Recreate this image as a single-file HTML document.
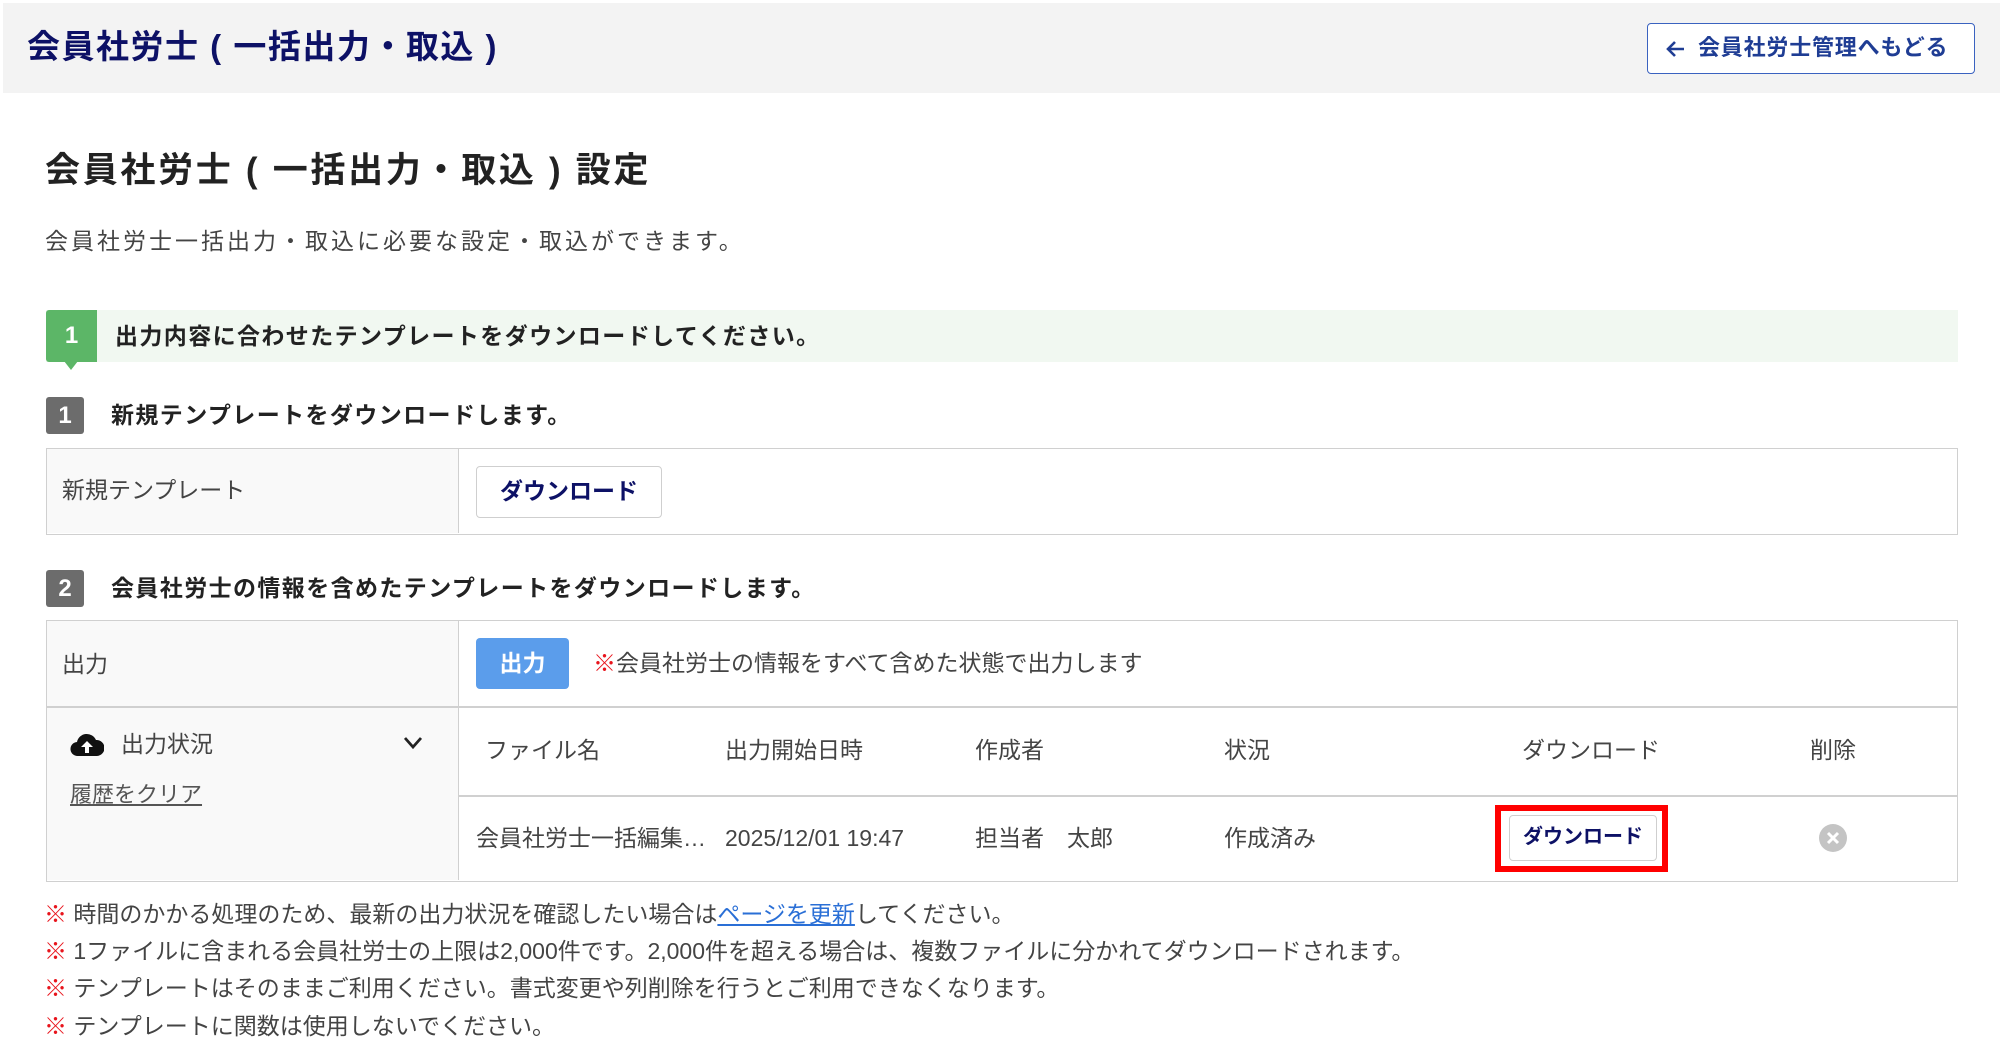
<!DOCTYPE html>
<html><head><meta charset="utf-8"><style>
*{margin:0;padding:0;box-sizing:border-box}
body{width:2000px;height:1053px;background:#fff;font-family:"Liberation Sans","Noto Sans CJK JP",sans-serif;color:#333;position:relative;overflow:hidden}
.a{position:absolute;white-space:nowrap}
.hdr{left:3px;top:3px;width:1997px;height:90px;background:#f3f3f3}
.t1{left:27px;top:24px;font-size:33px;font-weight:bold;color:#0d1166;line-height:46px;letter-spacing:1.5px}
.back{left:1647px;top:23px;width:328px;height:51px;border:1.5px solid #3a62c0;border-radius:4px;background:#fff;color:#1f3d94;font-weight:bold;font-size:22px;line-height:48px;padding-left:50px;letter-spacing:0.8px}
.h1{left:45px;top:148px;font-size:35px;font-weight:bold;color:#222;line-height:46px;letter-spacing:2.7px}
.desc{left:45px;top:225px;font-size:23px;color:#444;line-height:32px;letter-spacing:3px}
.gbar{left:46px;top:310px;width:1912px;height:52px;background:#f1f8f1}
.gb{left:46px;top:310px;width:51px;height:52px;background:#5cb667;color:#fff;font-weight:bold;font-size:24px;text-align:center;line-height:52px;border-radius:3px 0 0 3px}
.gt{left:115px;top:318px;font-size:23px;font-weight:bold;color:#222;line-height:36px;letter-spacing:1.4px}
.nb{width:38px;height:37px;background:#6c6c6c;color:#fff;font-weight:bold;font-size:24px;text-align:center;line-height:37px;border-radius:3px}
.st{font-size:23px;font-weight:bold;color:#222;line-height:37px;letter-spacing:1.4px}
.box{border:1.5px solid #d0d0d0;background:#fff}
.lab{background:#f9f9f9;border-right:1.5px solid #d0d0d0}
.f{font-size:23px;color:#444;line-height:32px}
.btn{border:1.5px solid #cfcfcf;border-radius:4px;background:#fff;color:#0d1166;font-weight:bold;text-align:center}
.hl{height:1.5px;background:#d0d0d0}
.r{color:#e8141c;font-weight:bold}
</style></head><body>
<div class="a hdr"></div>
<div class="a t1">会員社労士 ( 一括出力・取込 )</div>
<div class="a back">会員社労士管理へもどる</div>
<svg class="a" style="left:1665px;top:38px" width="22" height="22" viewBox="0 0 22 22"><path d="M19 11H4M10 4L3 11l7 7" stroke="#1f3d94" stroke-width="2.6" fill="none"/></svg>
<div class="a h1">会員社労士 ( 一括出力・取込 ) 設定</div>
<div class="a desc">会員社労士一括出力・取込に必要な設定・取込ができます。</div>
<div class="a gbar"></div>
<div class="a gb">1</div>
<svg class="a" style="left:64px;top:361px" width="14" height="10"><path d="M0 0h14L7 9z" fill="#5cb667"/></svg>
<div class="a gt">出力内容に合わせたテンプレートをダウンロードしてください。</div>
<div class="a nb" style="left:46px;top:397px">1</div>
<div class="a st" style="left:111px;top:397px">新規テンプレートをダウンロードします。</div>
<div class="a box" style="left:46px;top:448px;width:1912px;height:87px"></div>
<div class="a lab" style="left:47px;top:449px;width:412px;height:84px"></div>
<div class="a f" style="left:62px;top:474px">新規テンプレート</div>
<div class="a btn" style="left:476px;top:466px;width:186px;height:52px;font-size:23px;line-height:49px">ダウンロード</div>
<div class="a nb" style="left:46px;top:570px">2</div>
<div class="a st" style="left:111px;top:570px">会員社労士の情報を含めたテンプレートをダウンロードします。</div>
<div class="a box" style="left:46px;top:620px;width:1912px;height:262px"></div>
<div class="a lab" style="left:47px;top:621px;width:412px;height:259px"></div>
<div class="a hl" style="left:47px;top:706px;width:1910px"></div>
<div class="a hl" style="left:459px;top:795px;width:1498px"></div>
<div class="a f" style="left:62px;top:648px">出力</div>
<div class="a" style="left:476px;top:638px;width:93px;height:51px;background:#5b9deb;border-radius:4px;color:#fff;font-weight:bold;font-size:23px;text-align:center;line-height:51px">出力</div>
<div class="a f" style="left:593px;top:647px"><span class="r">※</span>会員社労士の情報をすべて含めた状態で出力します</div>
<svg class="a" style="left:70px;top:732px" width="34" height="26" viewBox="0 0 34 26"><path d="M8 24a7 7 0 0 1-1-14 10 10 0 0 1 19-2 8 8 0 0 1 1 16z" fill="#111"/><path d="M17 9l-6 6h4v6h4v-6h4z" fill="#fff"/></svg>
<div class="a f" style="left:121px;top:728px">出力状況</div>
<svg class="a" style="left:403px;top:736px" width="20" height="14"><path d="M2 2l8 9 8-9" stroke="#222" stroke-width="2.8" fill="none"/></svg>
<div class="a f" style="left:70px;top:779px;text-decoration:underline;color:#555;font-size:22px">履歴をクリア</div>
<div class="a f" style="left:485px;top:734px">ファイル名</div>
<div class="a f" style="left:725px;top:734px">出力開始日時</div>
<div class="a f" style="left:975px;top:734px">作成者</div>
<div class="a f" style="left:1224px;top:734px">状況</div>
<div class="a f" style="left:1522px;top:734px">ダウンロード</div>
<div class="a f" style="left:1810px;top:734px">削除</div>
<div class="a f" style="left:476px;top:822px">会員社労士一括編集…</div>
<div class="a f" style="left:725px;top:822px">2025/12/01 19:47</div>
<div class="a f" style="left:975px;top:822px">担当者　太郎</div>
<div class="a f" style="left:1224px;top:822px">作成済み</div>
<div class="a" style="left:1495px;top:805px;width:173px;height:67px;border:6px solid #f00"></div>
<div class="a btn" style="left:1509px;top:815px;width:148px;height:46px;font-size:20px;line-height:43px">ダウンロード</div>
<svg class="a" style="left:1818px;top:823px" width="30" height="30"><circle cx="15" cy="15" r="14" fill="#c4c4c4"/><path d="M10 10l10 10M20 10L10 20" stroke="#fff" stroke-width="3"/></svg>
<div class="a f" style="left:44px;top:898px"><span class="r">※</span> 時間のかかる処理のため、最新の出力状況を確認したい場合は<span style="color:#2a6fd6;text-decoration:underline">ページを更新</span>してください。</div>
<div class="a f" style="left:44px;top:935px"><span class="r">※</span> 1ファイルに含まれる会員社労士の上限は2,000件です。2,000件を超える場合は、複数ファイルに分かれてダウンロードされます。</div>
<div class="a f" style="left:44px;top:972px"><span class="r">※</span> テンプレートはそのままご利用ください。書式変更や列削除を行うとご利用できなくなります。</div>
<div class="a f" style="left:44px;top:1010px"><span class="r">※</span> テンプレートに関数は使用しないでください。</div>
</body></html>
